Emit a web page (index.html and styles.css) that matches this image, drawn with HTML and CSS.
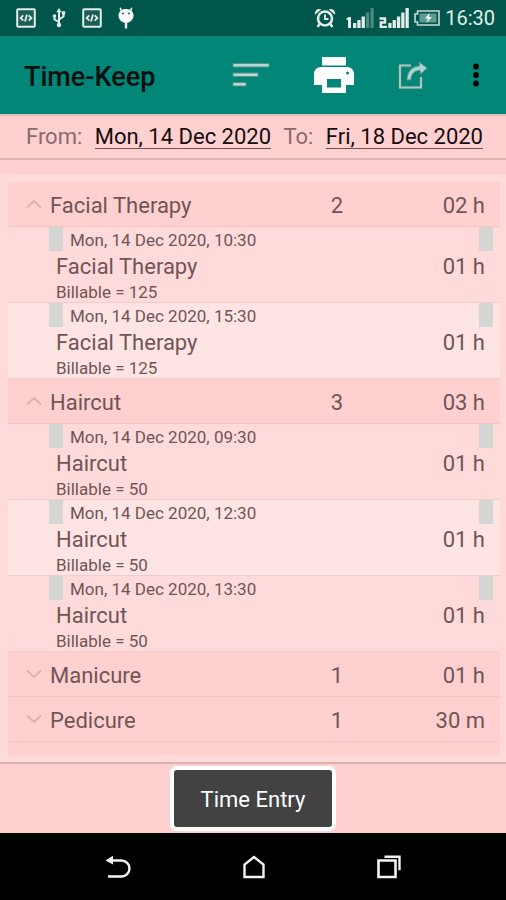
FILE: index.html
```html
<!DOCTYPE html>
<html lang="en">
<head>
<meta charset="utf-8">
<meta name="viewport" content="width=device-width, initial-scale=1">
<title>Time-Keep</title>
<link rel="stylesheet" href="styles.css">
</head>
<body>
<div class="screen">
  <div class="status">
    <div class="status-left">
      <svg width="20" height="20" viewBox="0 0 20 20"><rect x="1.2" y="1.2" width="17.6" height="17.6" rx="1" fill="#1b5f54" stroke="#e3ecea" stroke-width="2"/><path d="M7.3 7.4 4.6 10l2.7 2.6M12.7 7.4l2.7 2.6-2.7 2.6M11 6.6 9 13.4" fill="none" stroke="#e3ecea" stroke-width="1.8"/></svg>
      <svg width="14" height="20" viewBox="0 0 14 20"><path d="M7 3v13M7 14 2.500 11.500V8M7 11.500l4.500-3V5" fill="none" stroke="#e3ecea" stroke-width="2"/><path d="M7 0 9.600 4.200H4.400z" fill="#e3ecea"/><circle cx="7" cy="17" r="2.200" fill="#e3ecea"/><circle cx="2.500" cy="8" r="1.800" fill="#e3ecea"/><path d="M9.800 3.200h3.400v3.400H9.800z" fill="#e3ecea"/></svg>
      <svg width="20" height="20" viewBox="0 0 20 20"><rect x="1.2" y="1.2" width="17.6" height="17.6" rx="1" fill="#1b5f54" stroke="#e3ecea" stroke-width="2"/><path d="M7.3 7.4 4.6 10l2.7 2.6M12.7 7.4l2.7 2.6-2.7 2.6M11 6.6 9 13.4" fill="none" stroke="#e3ecea" stroke-width="1.8"/></svg>
      <svg width="16" height="22" viewBox="0 0 16 22"><path d="M3.500 4 2.200.8M12.500 4l1.300-3.200" stroke="#fff" stroke-width="1.500"/><path d="M8 2C3.500 2 .5 4.700.5 8.500c0 4 3.300 7.300 7.500 7.300s7.500-3.300 7.500-7.300C15.500 4.700 12.500 2 8 2z" fill="#fff"/><path d="M8 15v6.500" stroke="#e3ecea" stroke-width="2.400"/><circle cx="5" cy="6.500" r="1" fill="#1b5f54"/><circle cx="11" cy="6.500" r="1" fill="#1b5f54"/></svg>
    </div>
    <div class="status-right">
      <svg class="alarm" width="22" height="20" viewBox="0 0 22 20"><circle cx="11" cy="10.500" r="7" fill="none" stroke="#e3ecea" stroke-width="2.600"/><path d="M11 6.500v4.500h3.500" fill="none" stroke="#e3ecea" stroke-width="2"/><path d="M1 6.800C0 3 3.500-.3 7.200 1.400zM21 6.800C22 3 18.500-.3 14.800 1.400z" fill="#e3ecea"/><path d="m6 15.500-2.500 3.500M16 15.500l2.500 3.500" stroke="#e3ecea" stroke-width="2.400"/></svg>
      <svg width="28" height="20" viewBox="0 0 28 20"><path d="M.5 10.500 2.500 9h2.500v11H2v-8H.5z" fill="#e3ecea"/><path d="M7 15h3.300v5H7zM11.300 12h3.300v8h-3.300zM15.600 8.500h3.300V20h-3.300z" fill="#e3ecea"/><path d="M20 4.500h3.200V20H20zM24.500 0h3.200v20h-3.200z" fill="#4a8a80"/></svg>
      <svg width="30" height="20" viewBox="0 0 30 20"><path d="M.5 10.500H6v4H1.800V19H8" fill="none" stroke="#e3ecea" stroke-width="2.400"/><path d="M9.300 15h3.300v5H9.300zM13.600 12h3.300v8h-3.300zM17.900 8.500h3.300V20h-3.300zM22.200 4.500h3.300V20h-3.300zM26.500 0h3.300v20h-3.300z" fill="#e3ecea"/></svg>
      <svg width="26" height="16" viewBox="0 0 26 16"><path d="M3.500 1H25v14H3.500v-3H1V4h2.500z" fill="none" stroke="#c9dbd8" stroke-width="1.600"/><path d="M5.500 3.500h17v9h-17z" fill="#5f9a92"/><path d="m15.500 3-4.500 5.500h3L12.500 13 18 7h-3z" fill="#fff"/></svg>
      <span class="clock">16:30</span>
    </div>
  </div>

  <header class="appbar">
    <h1>Time-Keep</h1>
    <div class="actions">
      <button type="button" aria-label="Sort"><svg width="38" height="26" viewBox="0 0 38 26"><g stroke="#5d8f88" stroke-width="1" fill="#b5d9d5"><path d="M1 1.500h36v3.500H1zM1 11h25v3.500H1zM1 20.500h13V24H1z"/></g></svg></button>
      <button type="button" aria-label="Print"><svg width="40" height="38" viewBox="0 0 40 38"><path fill="#fff" fill-rule="evenodd" d="M8 1h24v8.500H8zM7 11h26c4 0 7 3 7 7v11h-8v8H8v-8H0V18c0-4 3-7 7-7zm6 12v8.500h14V23zM33.500 15.500a1.500 1.500 0 1 0 0 3 1.500 1.500 0 0 0 0-3z"/></svg></button>
      <button type="button" aria-label="Share"><svg width="30" height="28" viewBox="0 0 30 28"><path d="M13 4.500H2v22h21V16" fill="none" stroke="#3d8077" stroke-width="3.400"/><path d="M13 4.500H2v22h21V16" fill="none" stroke="#a3cbc6" stroke-width="2"/><path d="M21 .8 29.300 7 22.500 13.500l-.6-4C16 9.800 13.500 13 12.800 19H8.800C9 10.500 14 5.300 21.600 4.800z" fill="#a9d3cf" stroke="#4e8b83" stroke-width="1"/></svg></button>
      <button type="button" aria-label="More options"><svg width="8" height="24" viewBox="0 0 8 24"><circle cx="4" cy="3.500" r="2.900"/><circle cx="4" cy="12" r="2.900"/><circle cx="4" cy="20.500" r="2.900"/></svg></button>
    </div>
  </header>

  <div class="range">
    <span id="from">From:</span>
    <button type="button" class="date" aria-describedby="from">Mon, 14 Dec 2020</button>
    <span id="to">To:</span>
    <button type="button" class="date" aria-describedby="to">Fri, 18 Dec 2020</button>
  </div>

  <main class="panel">
    <div class="list">
      <button type="button" class="group" aria-expanded="true"><svg class="chev" viewBox="0 0 16 10"><path d="m1 8.500 7-6.500 7 6.500"/></svg><span class="name">Facial Therapy</span><span class="count">2</span><span class="time">02 h</span></button>
      <ul>
        <li class="entry"><i class="mark"></i><span class="when">Mon, 14 Dec 2020, 10:30</span><i class="mark"></i><span class="task">Facial Therapy</span><span class="hours">01 h</span><span class="bill">Billable = 125</span></li>
        <li class="entry"><i class="mark"></i><span class="when">Mon, 14 Dec 2020, 15:30</span><i class="mark"></i><span class="task">Facial Therapy</span><span class="hours">01 h</span><span class="bill">Billable = 125</span></li>
      </ul>
      <button type="button" class="group" aria-expanded="true"><svg class="chev" viewBox="0 0 16 10"><path d="m1 8.500 7-6.500 7 6.500"/></svg><span class="name">Haircut</span><span class="count">3</span><span class="time">03 h</span></button>
      <ul>
        <li class="entry"><i class="mark"></i><span class="when">Mon, 14 Dec 2020, 09:30</span><i class="mark"></i><span class="task">Haircut</span><span class="hours">01 h</span><span class="bill">Billable = 50</span></li>
        <li class="entry"><i class="mark"></i><span class="when">Mon, 14 Dec 2020, 12:30</span><i class="mark"></i><span class="task">Haircut</span><span class="hours">01 h</span><span class="bill">Billable = 50</span></li>
        <li class="entry"><i class="mark"></i><span class="when">Mon, 14 Dec 2020, 13:30</span><i class="mark"></i><span class="task">Haircut</span><span class="hours">01 h</span><span class="bill">Billable = 50</span></li>
      </ul>
      <button type="button" class="group" aria-expanded="false"><svg class="chev" viewBox="0 0 16 10"><path d="m1 1.500 7 6.500 7-6.500"/></svg><span class="name">Manicure</span><span class="count">1</span><span class="time">01 h</span></button>
      <button type="button" class="group" aria-expanded="false"><svg class="chev" viewBox="0 0 16 10"><path d="m1 1.500 7 6.500 7-6.500"/></svg><span class="name">Pedicure</span><span class="count">1</span><span class="time">30 m</span></button>
    </div>
  </main>

  <footer class="footer">
    <button type="button" class="entry-button">Time Entry</button>
  </footer>

  <nav class="nav">
    <button type="button" aria-label="Back"><svg width="26" height="24" viewBox="0 0 26 24"><path d="M4 5.500h12.500a8 8 0 0 1 0 16H3" fill="none" stroke="#f4f4f4" stroke-width="2.400"/><path d="M.5 5.500 8 .8v8.700z" fill="#f4f4f4"/></svg></button>
    <button type="button" aria-label="Home"><svg width="22" height="24" viewBox="0 0 22 24"><path d="M1.500 22V9.500L11 2l9.500 7.500V22z" fill="none" stroke="#f4f4f4" stroke-width="2.400"/></svg></button>
    <button type="button" aria-label="Recent apps"><svg width="24" height="24" viewBox="0 0 24 24"><path d="M1.500 5.500h17V22h-17z" fill="none" stroke="#f4f4f4" stroke-width="2.600"/><path d="M7.500 1.700h15v13.600" fill="none" stroke="#f4f4f4" stroke-width="2.400"/></svg></button>
  </nav>
</div>
</body>
</html>
```
FILE: styles.css
```css
* { box-sizing: border-box; }

body {
  margin: 0;
  font-family: Roboto, "Liberation Sans", sans-serif;
  color: #715456;
}

button {
  margin: 0;
  padding: 0;
  border: 0;
  background: none;
  font: inherit;
  color: inherit;
}

svg { display: block; }

.screen {
  display: flex;
  flex-direction: column;
  min-height: 100vh;
  background: #ffd0d0;
}

.status {
  display: flex;
  justify-content: space-between;
  align-items: center;
  height: 36px;
  padding: 0 11px 0 16px;
  background: #00564a;
}

.status-left,
.status-right { display: flex; align-items: center; }

.status-left { gap: 16px; }
.status-right { gap: 5px; }

.alarm { margin-right: 5px; }

.clock {
  font-size: 20px;
  line-height: 24px;
  color: #e3ecea;
}

.appbar {
  display: flex;
  justify-content: space-between;
  align-items: center;
  height: 78px;
  padding: 0 26px 0 24px;
  background: #028678;
}

h1 {
  margin: 0;
  padding-top: 3px;
  font-size: 27px;
  line-height: 36px;
  font-weight: 500;
  color: #04110f;
}

.actions { display: flex; align-items: center; gap: 44px; }

.range {
  display: flex;
  align-items: center;
  justify-content: space-between;
  height: 46px;
  padding: 0 23px 0 26px;
  border-top: 2px solid #e6bcbc;
  border-bottom: 2px solid #e0b0b2;
  font-size: 22px;
  line-height: 26px;
  color: #8a6a6c;
}

.date {
  border-bottom: 1px solid #6e5354;
  line-height: 22px;
  color: #160c0c;
}

.panel {
  flex: 1;
  display: flex;
  flex-direction: column;
  margin-top: 14px;
  padding: 8px 6px 7px 8px;
  background: #ffdada;
}

.list { flex: 1; background: #ffd0d0; }

.group {
  display: grid;
  grid-template-columns: 16px 1fr 40px 128px;
  align-items: center;
  width: 100%;
  height: 45px;
  padding: 3px 15px 0 18px;
  border-bottom: 1px solid #f3c6c7;
  background: #ffd0d0;
  font-size: 22px;
  line-height: 26px;
  text-align: left;
}

.chev {
  width: 16px;
  margin-bottom: 4px;
  fill: none;
  stroke: #dfb0b2;
  stroke-width: 2;
}

.name { padding-left: 8px; }
.count { text-align: center; }
.time { text-align: right; }

ul { margin: 0; padding: 0; list-style: none; }

.entry {
  display: grid;
  grid-template-columns: 14px 1fr 14px;
  grid-template-rows: 24px 31px 20px;
  align-items: center;
  padding: 0 7px 0 41px;
  border-bottom: 1px solid #f3cccd;
  background: #ffdada;
  font-size: 22px;
}

.entry:nth-child(even) { background: #ffe4e4; }

.mark { align-self: stretch; background: #d3d6d3; }

.when,
.bill { font-size: 17px; line-height: 20px; }

.when { padding-top: 1px; padding-left: 7px; }

.task,
.hours { grid-row: 2; line-height: 26px; }

.task { grid-column: 1 / 3; padding-left: 7px; }

.hours { grid-column: 2 / 4; justify-self: end; padding-right: 8px; }

.bill { grid-column: 1 / 3; padding-left: 7px; }

.footer {
  display: flex;
  justify-content: center;
  padding: 2px 0;
  border-top: 2px solid #dcb0b2;
}

.entry-button {
  padding: 20px 27px 17px;
  border: 4px solid #fff;
  border-radius: 7px;
  background: #424242;
  font-size: 22px;
  line-height: 20px;
  color: #fff;
}

.nav {
  display: flex;
  justify-content: center;
  align-items: center;
  gap: 112px;
  height: 67px;
  background: #000;
}
```
